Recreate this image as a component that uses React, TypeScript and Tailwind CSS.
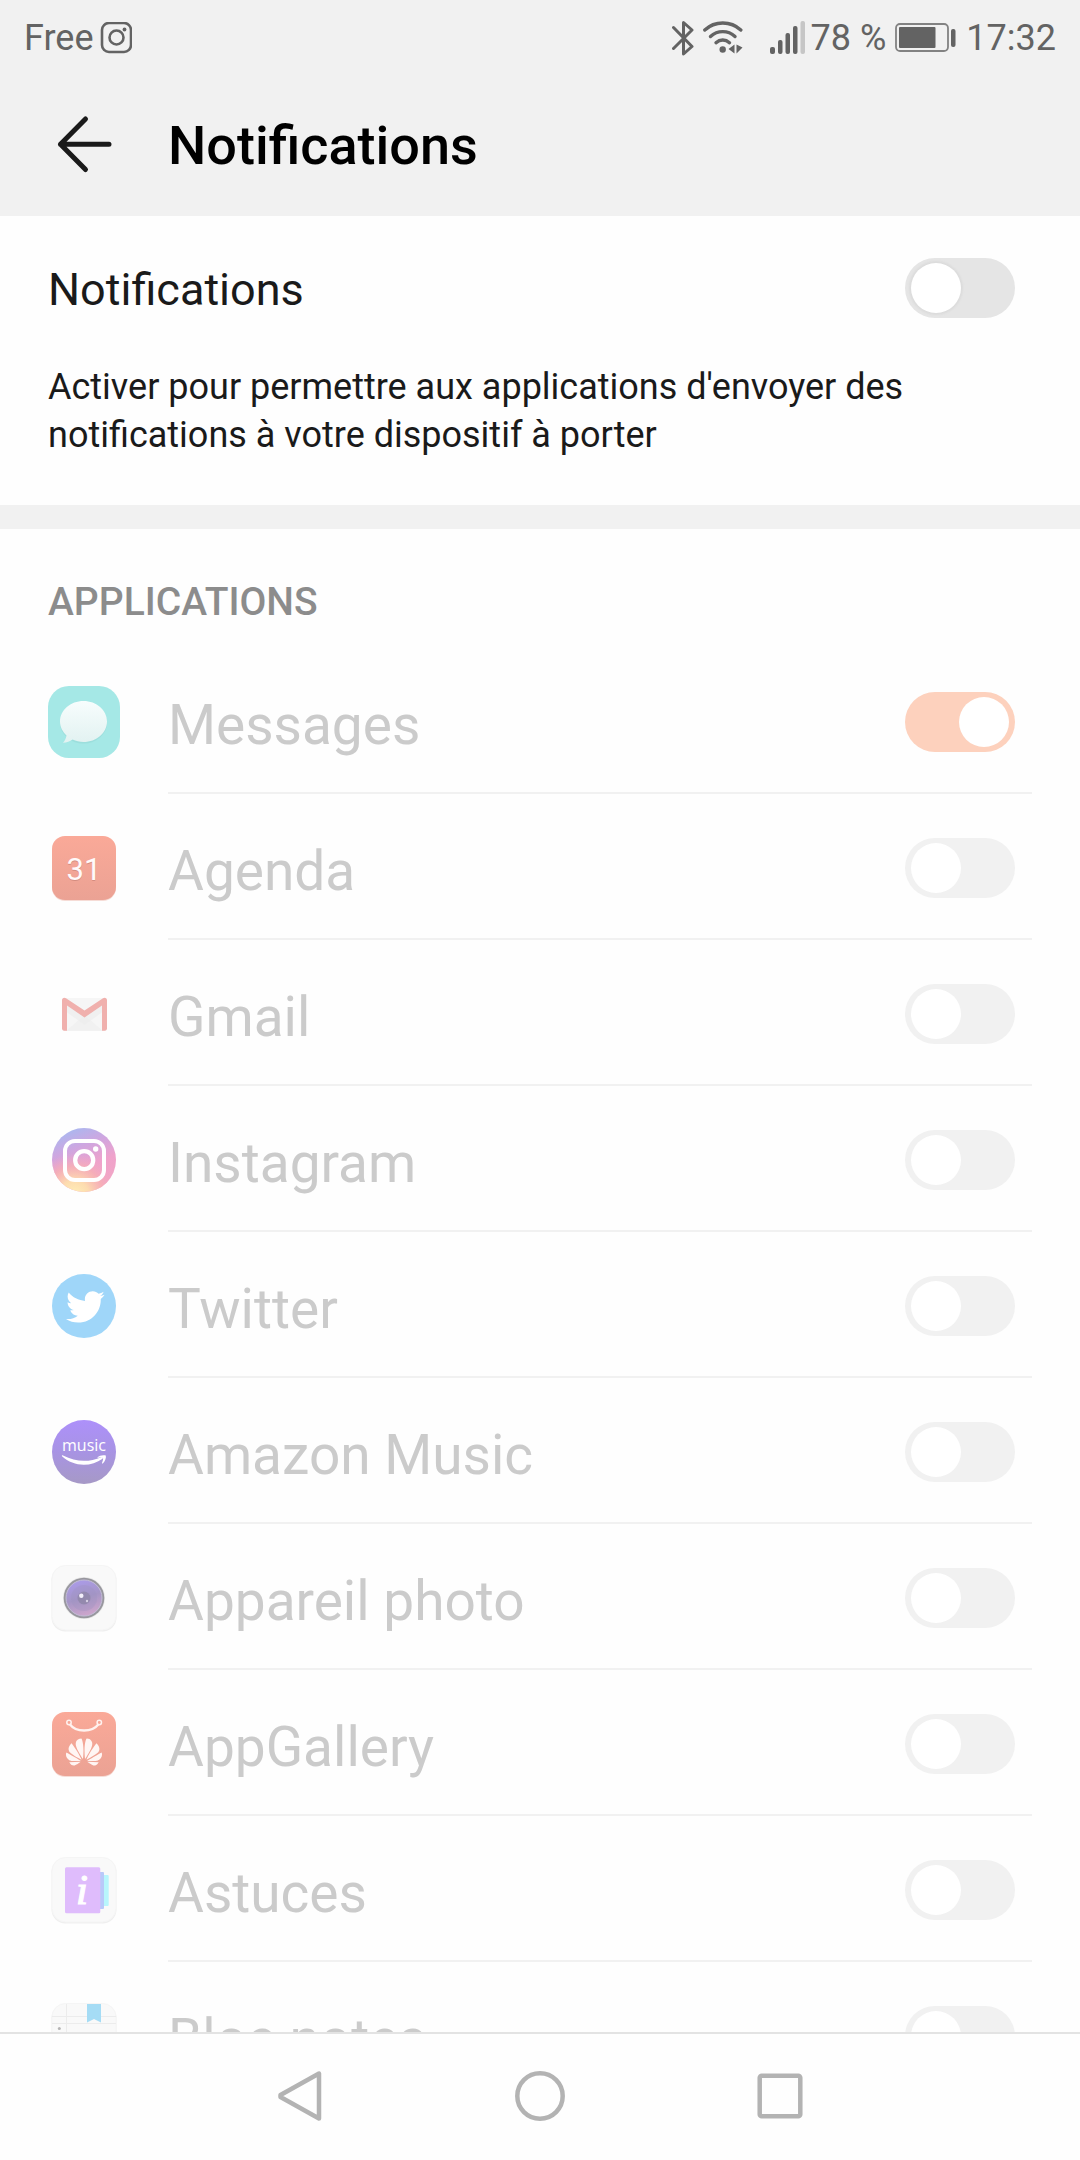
import type { ReactNode } from "react";
import clsx from "clsx";
import { FaTwitter } from "react-icons/fa";
import { SiHuawei } from "react-icons/si";

const IconFrame = ({ children }: { children: ReactNode }) => (
    <svg viewBox="0 0 72 72" className="w-[72px] h-[72px] shrink-0" aria-hidden="true">
        {children}
    </svg>
);

const MessagesIcon = () => (
    <IconFrame>
        <defs>
            <linearGradient id="bubble" x1="0" y1="0" x2="0" y2="1">
                <stop offset="0" stopColor="#f7fdfd" />
                <stop offset="1" stopColor="#e2f2f1" />
            </linearGradient>
        </defs>
        <rect width="72" height="72" rx="21" fill="#a5e8e6" />
        <ellipse cx="35.5" cy="37" rx="23.5" ry="20.5" fill="#93d6d4" opacity="0.5" />
        <path
            d="M35.500 15C22.500 15 12 24.200 12 35.500c0 5.500 2.600 10.300 6.500 13.900-.6 3-1.600 5.400-3.500 7.300 4 0 6.800-1.300 9.600-3.200 3.300 1.600 7 2.500 10.900 2.500C48.500 56 59 46.800 59 35.500S48.500 15 35.500 15z"
            fill="url(#bubble)"
        />
    </IconFrame>
);

const AgendaIcon = () => (
    <IconFrame>
        <defs>
            <linearGradient id="agenda" x1="0" y1="0" x2="0" y2="1">
                <stop offset="0" stopColor="#faa998" />
                <stop offset="1" stopColor="#eba294" />
            </linearGradient>
        </defs>
        <rect x="4" y="5" width="64" height="64" rx="13" fill="#f6dcd6" />
        <rect x="4" y="4" width="64" height="64" rx="13" fill="url(#agenda)" />
        <text x="36" y="49" textAnchor="middle" fontSize="31" fill="#d48d80">31</text>
        <text x="36" y="48" textAnchor="middle" fontSize="31" fill="#fffafa">31</text>
    </IconFrame>
);

const GmailIcon = () => (
    <IconFrame>
        <rect x="14" y="20" width="45" height="33" rx="2" fill="#f6f6f6" />
        <path d="M18.500 52.700L36.500 37 54.500 52.700z" fill="#f1f1f1" />
        <path d="M18.500 26l18 13 18-13v8L36.500 47l-18-13z" fill="#ececec" opacity="0.6" />
        <path
            d="M14 22.200c0-2.200 2.200-3.200 4-1.900L36.500 32.500 55 20.300c1.800-1.300 4-.3 4 1.900v28.300c0 1.200-1 2.200-2.200 2.200h-2.800V27.500L36.500 39.500 19 27.500v25.200h-2.800c-1.200 0-2.200-1-2.200-2.200z"
            fill="#f0b0ad"
        />
    </IconFrame>
);

const InstagramIcon = () => (
    <IconFrame>
        <defs>
            <linearGradient id="insta" x1="0.300" y1="0" x2="0.700" y2="1">
                <stop offset="0" stopColor="#a9b8f0" />
                <stop offset="0.300" stopColor="#cfa6e0" />
                <stop offset="0.600" stopColor="#efa2cb" />
                <stop offset="1" stopColor="#f2a7c4" />
            </linearGradient>
            <radialGradient id="instaGlow" cx="0.350" cy="1.050" r="0.650">
                <stop offset="0" stopColor="#fff0b8" />
                <stop offset="0.350" stopColor="#fddcaf" />
                <stop offset="0.700" stopColor="#f7b0b4" stopOpacity="0.800" />
                <stop offset="1" stopColor="#f2a7c4" stopOpacity="0" />
            </radialGradient>
        </defs>
        <circle cx="36" cy="36" r="32" fill="url(#insta)" />
        <circle cx="36" cy="36" r="32" fill="url(#instaGlow)" />
        <rect x="17" y="17" width="39" height="39" rx="10" fill="none" stroke="#fff" strokeWidth="4" />
        <circle cx="36.200" cy="36.200" r="9" fill="none" stroke="#fff" strokeWidth="4.300" />
        <circle cx="47.700" cy="25" r="2.700" fill="#fff" />
    </IconFrame>
);

const TwitterIcon = () => (
    <IconFrame>
        <circle cx="36" cy="36" r="32" fill="#9fd6f9" />
        <FaTwitter x="18" y="17.500" size={38.7} color="#fff" />
    </IconFrame>
);

const AmazonMusicIcon = () => (
    <IconFrame>
        <defs>
            <linearGradient id="amazon" x1="0" y1="0" x2="0" y2="1">
                <stop offset="0" stopColor="#ad90fa" />
                <stop offset="0.450" stopColor="#a893e6" />
                <stop offset="1" stopColor="#a699c6" />
            </linearGradient>
        </defs>
        <circle cx="36" cy="36" r="32" fill="url(#amazon)" />
        <text x="36" y="35" textAnchor="middle" fontSize="16" fill="#fff" className="font-['Open_Sans',sans-serif]">
            music
        </text>
        <path d="M14 40.300c-.4-.6.300-1.200 1-.8 13 6.600 25.500 7 38.500 1.700 1.200-.4 2 .8 1 1.500C43 51.200 25.500 51 14 40.300z" fill="#fff" />
        <path d="M49.500 41.200c2-2 6-2.500 8.300-1.700.6 2.300-.7 6-3 7.900-.5.300-1 0-.8-.5.700-1.600 1.500-4 1-4.800-.7-.7-3-.6-4.700-.4-.7.100-1.100-.1-.8-.5z" fill="#fff" />
    </IconFrame>
);

const WhiteTile = () => (
    <>
        <rect x="3.500" y="4.500" width="65" height="65" rx="14" fill="#efefef" />
        <rect x="4" y="3.500" width="64" height="64.500" rx="13.500" fill="#f9f9f9" stroke="#f5f5f5" />
    </>
);

const CameraIcon = () => (
    <IconFrame>
        <defs>
            <linearGradient id="lens" x1="0.300" y1="0" x2="0.600" y2="1">
                <stop offset="0" stopColor="#ab9bea" />
                <stop offset="0.500" stopColor="#a596c6" />
                <stop offset="1" stopColor="#cfa6cc" />
            </linearGradient>
        </defs>
        <WhiteTile />
        <circle cx="36" cy="36" r="21" fill="#e6e6e6" />
        <circle cx="36" cy="36" r="20.300" fill="#98979e" />
        <circle cx="36" cy="36" r="18" fill="url(#lens)" stroke="#c2bcd6" strokeWidth="1" />
        <circle cx="36" cy="36" r="13" fill="#9d93c0" opacity="0.350" />
        <circle cx="36" cy="36" r="6.500" fill="#8e86a8" opacity="0.800" />
        <circle cx="33.300" cy="33.700" r="2.200" fill="#f3effa" />
        <circle cx="39" cy="39" r="1.200" fill="#d5cfe4" />
    </IconFrame>
);

const AppGalleryIcon = () => (
    <IconFrame>
        <rect x="4" y="5" width="64" height="64" rx="13" fill="#f6dcd6" />
        <rect x="4" y="4" width="64" height="64" rx="13" fill="url(#agenda)" />
        <g fill="none" stroke="#fff3f0">
            <circle cx="21" cy="14.500" r="2.200" strokeWidth="1.500" />
            <circle cx="51.300" cy="14.500" r="2.200" strokeWidth="1.500" />
            <path d="M22 16.500c6 8 22 8 28.300 0" strokeWidth="2.300" />
        </g>
        <SiHuawei x="18" y="26" size={36} color="#fff6f4" />
    </IconFrame>
);

const TipsIcon = () => (
    <IconFrame>
        <WhiteTile />
        <rect x="48" y="21" width="12.700" height="31" rx="1" fill="#b8f6fc" />
        <rect x="46" y="18" width="10" height="37" rx="1" fill="#b9c9f9" />
        <rect x="17" y="13.300" width="35.300" height="46" rx="1.500" fill="#dfbcfc" />
        <text
            x="34"
            y="50"
            textAnchor="middle"
            fontSize="43"
            fontStyle="italic"
            fill="#fff"
            stroke="#fff"
            strokeWidth="1.200"
            className="font-['Liberation_Serif',serif]"
        >
            i
        </text>
    </IconFrame>
);

const NotepadIcon = () => (
    <IconFrame>
        <WhiteTile />
        <path d="M18.500 4v64M4 16.500h64M4 23.500h64" stroke="#ececec" fill="none" />
        <path d="M39 4h14v18.500L46 19l-7 3.500z" fill="#a5dcf5" />
        <circle cx="11.300" cy="28.500" r="1.500" fill="#b5b5b5" />
    </IconFrame>
);

const apps = [
    { name: "Messages", icon: <MessagesIcon />, enabled: true },
    { name: "Agenda", icon: <AgendaIcon />, enabled: false },
    { name: "Gmail", icon: <GmailIcon />, enabled: false },
    { name: "Instagram", icon: <InstagramIcon />, enabled: false },
    { name: "Twitter", icon: <TwitterIcon />, enabled: false },
    { name: "Amazon Music", icon: <AmazonMusicIcon />, enabled: false },
    { name: "Appareil photo", icon: <CameraIcon />, enabled: false },
    { name: "AppGallery", icon: <AppGalleryIcon />, enabled: false },
    { name: "Astuces", icon: <TipsIcon />, enabled: false },
    { name: "Bloc notes", icon: <NotepadIcon />, enabled: false },
];

type SwitchProps = { id: string; defaultChecked?: boolean; disabled?: boolean };

const Switch = ({ id, defaultChecked, disabled }: SwitchProps) => (
    <input
        id={id}
        type="checkbox"
        role="switch"
        defaultChecked={defaultChecked}
        disabled={disabled}
        className={clsx(
            "appearance-none shrink-0 flex items-center w-[110px] h-[60px] px-[6px] rounded-full",
            "before:block before:w-[50px] before:h-[50px] before:rounded-full before:bg-white checked:justify-end",
            disabled ? "bg-[#f1f1f1] checked:bg-[#fdd1bd]" : "bg-[#e5e5e5] checked:bg-[#fa7b3c] before:shadow-[0_0_2px_2px_#dcdcdc]"
        )}
    />
);

const StatusBar = () => (
    <div className="h-[76px] px-6 flex items-center justify-between text-4xl leading-[48px] text-[#636363]">
        <div className="flex items-center gap-[6px]">
            <span>Free</span>
            <svg viewBox="0 0 32 32" className="w-8 h-8" fill="none" stroke="currentColor" aria-hidden="true">
                <rect x="2" y="1" width="29" height="29" rx="7" strokeWidth="2.600" />
                <circle cx="16.500" cy="15.500" r="7" strokeWidth="2.600" />
                <circle cx="24.500" cy="7.500" r="1.900" fill="currentColor" stroke="none" />
            </svg>
        </div>
        <div className="flex items-center">
            <svg viewBox="0 0 22 36" className="w-[22px] h-9 mr-[9px]" fill="none" stroke="currentColor" strokeWidth="3" strokeLinejoin="round" strokeLinecap="round" aria-hidden="true">
                <path d="M1.500 7.500L20 26.500l-8.500 7.500V2.500L20 10 1.500 28.500" />
            </svg>
            <svg viewBox="0 0 40 34" className="w-10 h-[34px] mr-[27px]" fill="none" stroke="currentColor" strokeWidth="3.400" strokeLinecap="round" aria-hidden="true">
                <path d="M1.800 9c10-9.300 26-9.300 36 0" />
                <path d="M7.500 15.500c7-6.500 17.500-6.500 24.500 0" />
                <path d="M13 21.700c4-3.600 9.500-3.600 13.500 0" />
                <circle cx="19.700" cy="28.500" r="3.200" fill="currentColor" stroke="none" />
                <path d="M31.500 23.500v9l-6-4.500zM33.500 23.500v9l6-6z" fill="currentColor" stroke="none" />
            </svg>
            <svg viewBox="0 0 36 34" className="w-9 h-[34px] mr-[5px]" fill="currentColor" aria-hidden="true">
                <rect x="0" y="26" width="5" height="7" rx="2" />
                <rect x="8" y="19" width="4.500" height="14" rx="2" />
                <rect x="15.500" y="12" width="4.500" height="21" rx="2" />
                <rect x="23" y="5" width="4.500" height="28" rx="2" />
                <rect x="30.500" y="0" width="4.500" height="33" rx="2" fill="#c6c6c6" />
            </svg>
            <span>78 %</span>
            <svg viewBox="0 0 61 30" className="w-[61px] h-[30px] ml-[9px] mr-[10px]" aria-hidden="true">
                <rect x="1" y="1" width="52" height="27" rx="4" fill="none" stroke="#828282" strokeWidth="1.800" />
                <rect x="4" y="4" width="36.500" height="21" rx="1" fill="currentColor" />
                <rect x="56" y="6" width="4.500" height="18" rx="2" fill="currentColor" />
            </svg>
            <span>17:32</span>
        </div>
    </div>
);

const NavBar = () => (
    <nav className="h-32 shrink-0 border-t-2 border-[#e3e3e3] flex items-center justify-center gap-[180px] text-[#b3b3b3]">
        <button type="button" aria-label="Retour">
            <svg viewBox="0 0 60 60" className="w-[60px] h-[60px]" fill="none" stroke="currentColor" strokeWidth="4.500" strokeLinejoin="round">
                <path d="M10.500 28L49 6.500v45L10.500 30z" />
            </svg>
        </button>
        <button type="button" aria-label="Accueil">
            <svg viewBox="0 0 60 60" className="w-[60px] h-[60px]" fill="none" stroke="currentColor" strokeWidth="4.500">
                <circle cx="30" cy="29" r="22.700" />
            </svg>
        </button>
        <button type="button" aria-label="Applications récentes">
            <svg viewBox="0 0 60 60" className="w-[60px] h-[60px]" fill="none" stroke="currentColor" strokeWidth="4.500">
                <rect x="9.700" y="8.700" width="40.600" height="40.600" rx="2" />
            </svg>
        </button>
    </nav>
);

export default function App() {
    return (
        <div className="h-screen flex flex-col bg-[#fefefe] font-[Roboto,sans-serif] text-[#1a1a1a]">
            <header className="shrink-0 bg-[#f1f1f1]">
                <StatusBar />
                <div className="h-[140px] pl-12 flex items-center gap-12">
                    <button type="button" aria-label="Retour">
                        <svg viewBox="0 0 72 72" className="w-[72px] h-[72px]" fill="none" stroke="currentColor" strokeWidth="5" strokeLinecap="round" strokeLinejoin="round">
                            <path d="M37.500 9L12.500 34.200 37.500 59.500M12.500 34.200H61" />
                        </svg>
                    </button>
                    <h1 className="text-[54px] leading-[64px] font-medium text-black">Notifications</h1>
                </div>
            </header>

            <main className="flex-1 min-h-0 overflow-y-auto [scrollbar-width:none]">
                <section className="border-b-[24px] border-[#f1f1f1]">
                    <div className="h-36 pl-12 pr-[65px] flex items-center justify-between">
                        <label htmlFor="all" className="pt-1 text-[45px] leading-[64px]">Notifications</label>
                        <Switch id="all" />
                    </div>
                    <p className="px-12 pt-[3px] pb-[46px] text-4xl leading-[48px]">
                        Activer pour permettre aux applications d'envoyer des notifications à votre dispositif à porter
                    </p>
                </section>

                <section>
                    <h2 className="px-12 pt-[49px] pb-[22px] text-[39px] leading-[48px] font-medium text-[#8c8c8c]">APPLICATIONS</h2>
                    <ul>
                        {apps.map(({ name, icon, enabled }) => (
                            <li key={name} className="h-[146px] px-12 pt-[2px] flex items-center gap-12">
                                {icon}
                                <div className="flex-1 h-full pt-[2px] pr-[17px] flex items-center justify-between border-b-2 border-[#f1f1f1]">
                                    <label htmlFor={name} className="pt-[6px] text-[55px] leading-[64px] text-[#cbcbcb]">{name}</label>
                                    <Switch id={name} defaultChecked={enabled} disabled />
                                </div>
                            </li>
                        ))}
                    </ul>
                </section>
            </main>

            <NavBar />
        </div>
    );
}
